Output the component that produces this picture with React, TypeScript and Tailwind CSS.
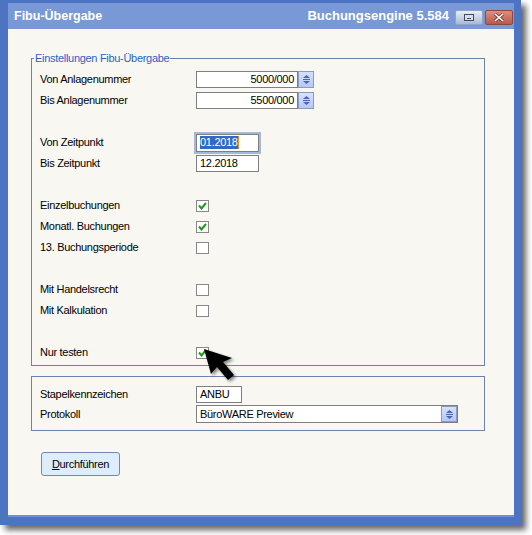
import React from "react";

const font = { fontFamily: '"Liberation Sans", Arial, sans-serif' };

function Spinner({ h = 17 }: { h?: number }) {
  return (
    <div
      className="w-[16px] border border-[#8c9bbd] bg-gradient-to-b from-[#d6e1fd] to-[#b6c8f8] flex items-center justify-center"
      style={{ height: h }}
    >
      <svg width="9" height="11" viewBox="0 0 9 11">
        <polygon points="1,4 4.5,1 8,4" fill="#4a68ad" />
        <rect x="1" y="5" width="7" height="1" fill="#4a68ad" />
        <polygon points="1,7 4.5,10 8,7" fill="#4a68ad" />
      </svg>
    </div>
  );
}

function Check({ on }: { on?: boolean }) {
  return (
    <div className="w-[13px] h-[12px] border border-[#878787] bg-white flex items-center justify-center">
      {on && (
        <svg width="9" height="8" viewBox="0 0 9 8">
          <path d="M1 3.5 L3.5 6.5 L8 1" stroke="#1f9a1f" strokeWidth="2" fill="none" />
        </svg>
      )}
    </div>
  );
}

function Row({ label, children }: { label?: string; children?: React.ReactNode }) {
  return (
    <div className="h-[21px] flex items-center pl-[6px]">
      <div className="w-[156px] text-black">{label}</div>
      {children}
    </div>
  );
}

function NumField({ value }: { value: string }) {
  return (
    <div className="flex">
      <div className="w-[102px] h-[17px] border border-[#7f7f7f] bg-white text-right pr-[3px] leading-[15px]">
        {value}
      </div>
      <Spinner />
    </div>
  );
}

export default function App() {
  return (
    <div className="w-[532px] h-[535px] bg-white text-[11px] tracking-[-0.3px]" style={font}>
      <div className="relative w-[521px] h-[525px] bg-[#4d73c3] flex flex-col pt-[3px] pl-[8px] pr-[7px] pb-[8px] shadow-[5px_5px_6px_rgba(0,0,0,0.6)]">
        {/* title bar */}
        <div className="h-[26px] bg-[#7899d6] flex items-center pl-[6px] text-white font-bold text-[12.5px] tracking-normal">
          <span>Fibu-Übergabe</span>
          <span className="ml-auto mr-[6px] text-[13px]">Buchungsengine 5.584</span>
          <div className="w-[28px] h-[15px] mt-[2px] rounded-[2px] border border-[#8ea3c9] bg-gradient-to-b from-[#e8eef8] to-[#a9bad6] flex items-center justify-center">
            <div className="w-[10px] h-[7px] border border-[#404a5c] bg-[#d9e0ec] flex items-end justify-center pb-[1px]">
              <div className="w-[4px] h-[1px] bg-[#404a5c]" />
            </div>
          </div>
          <div className="w-[28px] h-[15px] mt-[2px] ml-[2px] mr-[1px] rounded-[2px] border border-[#8a4a40] bg-gradient-to-b from-[#e08d7e] to-[#b9584a] flex items-center justify-center">
            <svg width="12" height="9" viewBox="0 0 12 9">
              <path d="M2 1 L10 8 M10 1 L2 8" stroke="#6a3a30" strokeWidth="3" />
              <path d="M2 1 L10 8 M10 1 L2 8" stroke="#ffffff" strokeWidth="1.6" />
            </svg>
          </div>
        </div>

        {/* content */}
        <div className="flex-1 bg-[#f8f7f2] flex flex-col border-b-2 border-[#6b8fd8]">
          <fieldset className="mt-[22px] ml-[23px] w-[454px] border border-[#6d83ad] px-[2px] pt-[4px] pb-[2px]">
            <legend className="px-[1px] leading-[14px] text-[#2f5fc6]">Einstellungen Fibu-Übergabe</legend>
            <Row label="Von Anlagenummer">
              <NumField value="5000/000" />
            </Row>
            <Row label="Bis Anlagenummer">
              <NumField value="5500/000" />
            </Row>
            <Row />
            <Row label="Von Zeitpunkt">
              <div className="w-[63px] h-[18px] border border-[#7f7f7f] bg-white shadow-[0_0_0_2px_#a7b9da] pl-[3px] flex items-center">
                <span className="bg-[#316ac5] text-white leading-[13px]">01.2018</span>
                <span className="w-[1px] h-[13px] bg-[#f08a24]" />
              </div>
            </Row>
            <Row label="Bis Zeitpunkt">
              <div className="w-[63px] h-[17px] border border-[#7f7f7f] bg-white pl-[3px] leading-[15px]">
                12.2018
              </div>
            </Row>
            <Row />
            <Row label="Einzelbuchungen">
              <Check on />
            </Row>
            <Row label="Monatl. Buchungen">
              <Check on />
            </Row>
            <Row label="13. Buchungsperiode">
              <Check />
            </Row>
            <Row />
            <Row label="Mit Handelsrecht">
              <Check />
            </Row>
            <Row label="Mit Kalkulation">
              <Check />
            </Row>
            <Row />
            <Row label="Nur testen">
              <Check on />
            </Row>
          </fieldset>

          <fieldset className="mt-[10px] ml-[23px] w-[454px] border border-[#6d83ad] px-[2px] pt-[7px] pb-[6px]">
            <div className="h-[20px] flex items-center pl-[6px]">
              <div className="w-[156px]">Stapelkennzeichen</div>
              <div className="w-[46px] h-[17px] border border-[#7f7f7f] bg-white pl-[3px] leading-[15px]">ANBU</div>
            </div>
            <div className="h-[20px] flex items-center pl-[6px]">
              <div className="w-[156px]">Protokoll</div>
              <div className="w-[262px] h-[18px] border border-[#7f7f7f] bg-white flex">
                <div className="flex-1 pl-[3px] leading-[16px]">BüroWARE Preview</div>
                <Spinner h={16} />
              </div>
            </div>
          </fieldset>

          <button className="mt-[21px] ml-[33px] w-[79px] h-[24px] rounded-[3px] border border-[#7387b5] bg-[#deedfc] text-black text-[11px]">
            <span className="underline">D</span>urchführen
          </button>
        </div>

        {/* mouse cursor */}
        <svg className="absolute left-[196px] top-[342px]" width="50" height="45" viewBox="0 0 50 45">
          <defs>
            <filter id="blur" x="-20%" y="-20%" width="140%" height="140%">
              <feGaussianBlur stdDeviation="1.6" />
            </filter>
          </defs>
          <polygon
            points="8,7 15,32 21,25 32,38 38,33 27,20 36,16"
            fill="rgba(0,0,0,0.45)"
            filter="url(#blur)"
            transform="translate(2,2)"
          />
          <polygon points="8,7 15,32 21,25 32,38 38,33 27,20 36,16" fill="#000" />
        </svg>
      </div>
    </div>
  );
}
